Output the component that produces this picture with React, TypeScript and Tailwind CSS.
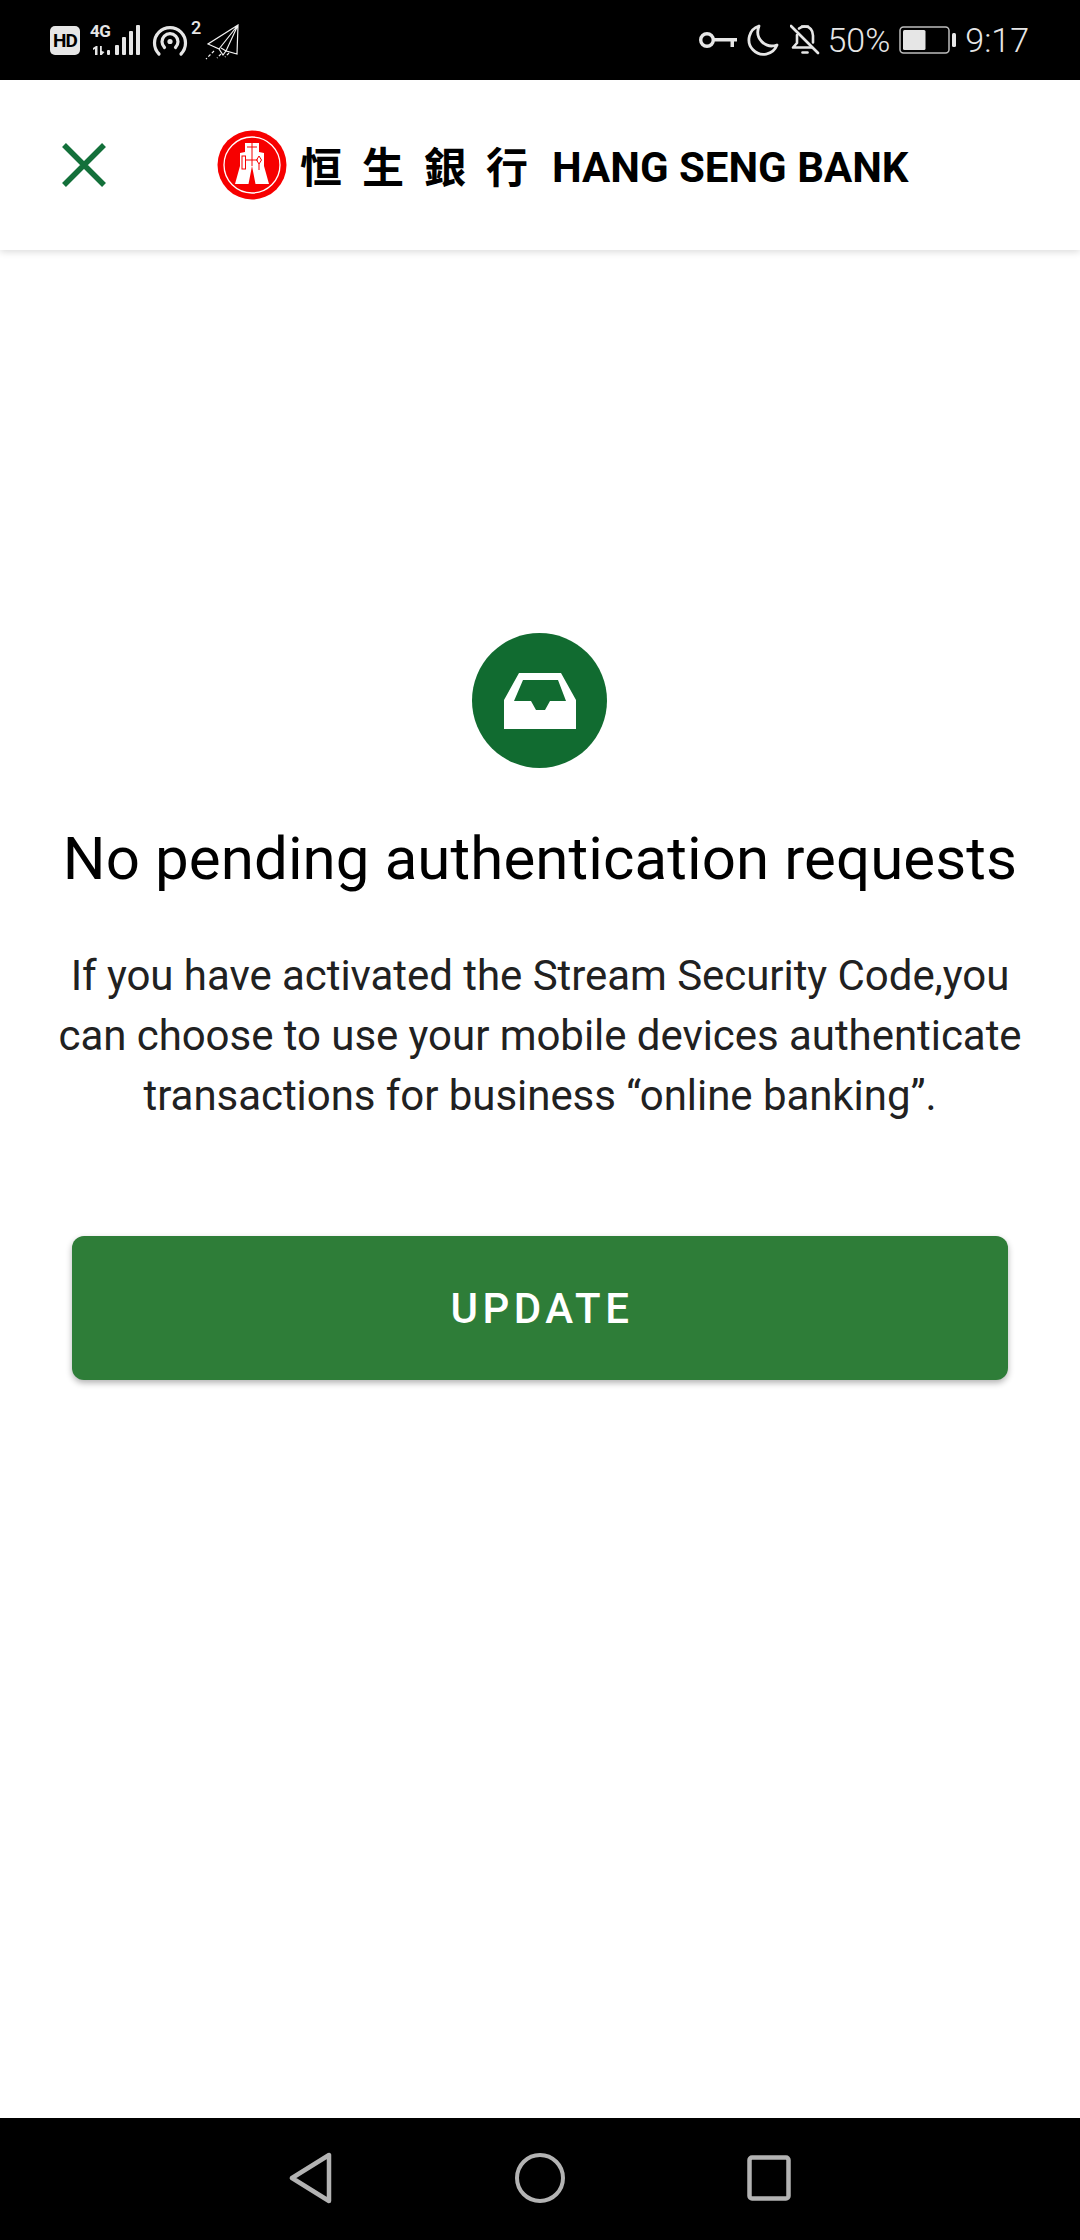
function HotspotIcon() {
  return (
    <svg width="36" height="36" viewBox="0 0 36 36" fill="none" stroke="#e6e6e6" strokeWidth="3.200" strokeLinecap="round">
      <path d="M7 31A15.500 15.500 0 1 1 29 31" />
      <path d="M12.500 24.500A8 8 0 1 1 23.500 24.500" />
      <circle cx="18" cy="18.500" r="2.600" fill="#e6e6e6" stroke="none" />
    </svg>
  )
}

function SignalIcon() {
  return (
    <svg width="50" height="32" viewBox="0 0 50 32" fill="#e6e6e6">
      <rect x="17" y="25" width="3" height="5" rx="1" />
      <rect x="25" y="20" width="4" height="10" rx="1" />
      <rect x="32" y="12" width="4" height="18" rx="1" />
      <rect x="39" y="6" width="4" height="24" rx="1" />
      <rect x="46" y="0" width="4" height="30" rx="1" />
      <path d="M3 23l3-2h1.500v9H5v-6l-2 1zM10 21h1.800v5l2.700 1-2.700 3H10z" />
    </svg>
  )
}

function PlaneIcon() {
  return (
    <svg width="36" height="36" viewBox="0 0 36 36" fill="none" stroke="#f2f2f2" strokeWidth="1.200">
      <path d="M35 1L5 20l11 5 4 6 3-4 11 3zM35 1L16 25M35 1L23 27l-5-3" />
      <path d="M11 27l-8 8M18 30l-4 4M26 29l-4 4" strokeDasharray="3 2" />
    </svg>
  )
}

function KeyIcon() {
  return (
    <svg width="40" height="18" viewBox="0 0 40 18" fill="none">
      <circle cx="9" cy="9" r="6.300" stroke="#e6e6e6" strokeWidth="3.400" />
      <path d="M16 7h23v3.500h-3V16h-3.500v-5.500H16z" fill="#e6e6e6" />
    </svg>
  )
}

function MoonIcon() {
  return (
    <svg width="32" height="32" viewBox="0 0 32 32" fill="none" stroke="#e6e6e6" strokeWidth="2.800" strokeLinejoin="round">
      <path d="M12 2A14.500 14.500 0 1 0 30 21 C19 25 7 15 12 2z" />
    </svg>
  )
}

function BellOffIcon() {
  return (
    <svg width="30" height="32" viewBox="0 0 30 32" fill="none" stroke="#e6e6e6" strokeWidth="2.600" strokeLinecap="round" strokeLinejoin="round">
      <path d="M1 2l27 27" />
      <path d="M9 4.500A9 9 0 0 1 15 2.500c5 0 8 4 8 9v7" />
      <path d="M7 11v8l-4 4.500h19" />
      <path d="M12 2.500h6" />
      <path d="M12.500 28.500h5" />
    </svg>
  )
}

function BatteryIcon() {
  return (
    <svg width="58" height="28" viewBox="0 0 58 28" fill="none">
      <rect x="1" y="1" width="49" height="26" rx="3.500" stroke="#bdbdbd" strokeWidth="1.500" />
      <rect x="4" y="4" width="22.500" height="20" rx="1.500" fill="#e6e6e6" />
      <rect x="53" y="7" width="4" height="14" rx="1.500" fill="#e6e6e6" />
    </svg>
  )
}

function StatusBar() {
  return (
    <div className="flex h-[80px] items-center justify-between bg-black pl-[50px] pr-[51px] text-[#e6e6e6] font-['Roboto',sans-serif]">
      <div className="flex items-center">
        <div className="flex h-[29px] w-[30px] items-center justify-center rounded-[5px] bg-[#e6e6e6] text-[19px] font-bold leading-none tracking-[-1px] text-black">HD</div>
        <div className="relative ml-[10px] h-[30px] w-[50px]">
          <SignalIcon />
          <span className="absolute left-0 top-[-3px] text-[17px] font-bold leading-[18px] tracking-[-0.5px]">4G</span>
        </div>
        <div className="ml-[12px] mt-[2px] h-[36px]"><HotspotIcon /></div>
        <span className="mb-[24px] ml-[3px] w-[10px] text-[18px] font-medium leading-none">2</span>
        <div className="ml-[2px] mt-[4px] h-[36px]"><PlaneIcon /></div>
      </div>
      <div className="flex items-center">
        <KeyIcon />
        <div className="ml-[9px] h-[32px]"><MoonIcon /></div>
        <div className="ml-[11px] h-[32px]"><BellOffIcon /></div>
        <span className="ml-[7px] text-[34px] font-light leading-none">50%</span>
        <div className="ml-[9px] h-[28px]"><BatteryIcon /></div>
        <span className="ml-[8px] text-[34px] font-light leading-none">9:17</span>
      </div>
    </div>
  )
}

function BankLogo() {
  return (
    <svg width="70" height="70" viewBox="0 0 70 70">
      <circle cx="35" cy="35" r="34.500" fill="#f70000" />
      <circle cx="35" cy="35" r="28" fill="none" stroke="#ffffff" strokeWidth="1.300" />
      <path d="M28 13h14v9l5 1v13l5 18H38.500L35 36l-3.500 18H18l5-18V23l5-1z" fill="#ffffff" />
      <path d="M35 13v23M30 17h10M29 30h12" stroke="#f70000" strokeWidth="1" />
      <rect x="25" y="26" width="3.500" height="13" fill="none" stroke="#f70000" strokeWidth="1" />
      <path d="M42 26l2.500 4-2.500 4-2.500-4zM42 34v6" fill="none" stroke="#f70000" strokeWidth="1" />
    </svg>
  )
}

function Header() {
  return (
    <div className="relative flex h-[170px] items-center bg-white pl-[62px] shadow-[0_2px_7px_rgba(0,0,0,0.14)]">
      <svg width="44" height="44" viewBox="0 0 44 44" stroke="#13703a" strokeWidth="5.500">
        <path d="M2 2l40 40M42 2L2 42" />
      </svg>
      <div className="ml-[111px] flex items-center">
        <BankLogo />
        <span className="ml-[13px] text-[42px] font-bold leading-none tracking-[20px] text-black font-['Noto_Sans_CJK_TC',serif]">恒生銀行</span>
        <span className="ml-[4px] mt-[6px] text-[42px] font-bold leading-none text-black font-['Roboto',sans-serif]">HANG SENG BANK</span>
      </div>
    </div>
  )
}

function InboxIcon() {
  return (
    <svg width="72" height="56" viewBox="0 0 72 56" fill="#ffffff" fillRule="evenodd">
      <path d="M15 0h42l15 27v29H0V27zM19 7L10 28h17l5 9h9l5-9h16L54 7z" />
    </svg>
  )
}

function NavBar() {
  return (
    <div className="mt-auto flex h-[122px] items-center justify-center gap-[182px] bg-black pb-[2px]">
      <svg width="44" height="52" viewBox="0 0 44 52" fill="none" stroke="#b3b3b3" strokeWidth="4.500" strokeLinejoin="round">
        <path d="M40 3v46L3 26z" />
      </svg>
      <svg width="50" height="50" viewBox="0 0 50 50" fill="none" stroke="#b3b3b3" strokeWidth="4">
        <circle cx="25" cy="25" r="23" />
      </svg>
      <svg width="44" height="46" viewBox="0 0 44 46" fill="none" stroke="#b3b3b3" strokeWidth="4.500">
        <rect x="2.500" y="2.500" width="39" height="41" rx="2.500" />
      </svg>
    </div>
  )
}

export default function App() {
  return (
    <div className="flex h-[2240px] w-[1080px] flex-col bg-white font-['Roboto',sans-serif]">
      <StatusBar />
      <Header />
      <div className="flex flex-col items-center pt-[383px]">
        <div className="-ml-[1px] flex h-[135px] w-[135px] items-center justify-center rounded-full bg-[#116b30]">
          <InboxIcon />
        </div>
        <div className="mt-[56px] text-[60px] leading-[70px] tracking-[0.1px] text-black">No pending authentication requests</div>
        <div className="mt-[52px] w-full px-[40px] text-center text-[42px] leading-[60px] tracking-[-0.05px] text-[#212121]">
          <p>If you have activated the Stream Security Code,you</p>
          <p>can choose to use your mobile devices authenticate</p>
          <p>transactions for business “online banking”.</p>
        </div>
        <button className="mt-[110px] flex h-[144px] w-[936px] items-center justify-center rounded-[12px] bg-[#2e7d38] pl-[4px] text-[42px] font-medium tracking-[4.500px] text-white shadow-[0_3px_6px_rgba(0,0,0,0.3)]">
          UPDATE
        </button>
      </div>
      <NavBar />
    </div>
  )
}
